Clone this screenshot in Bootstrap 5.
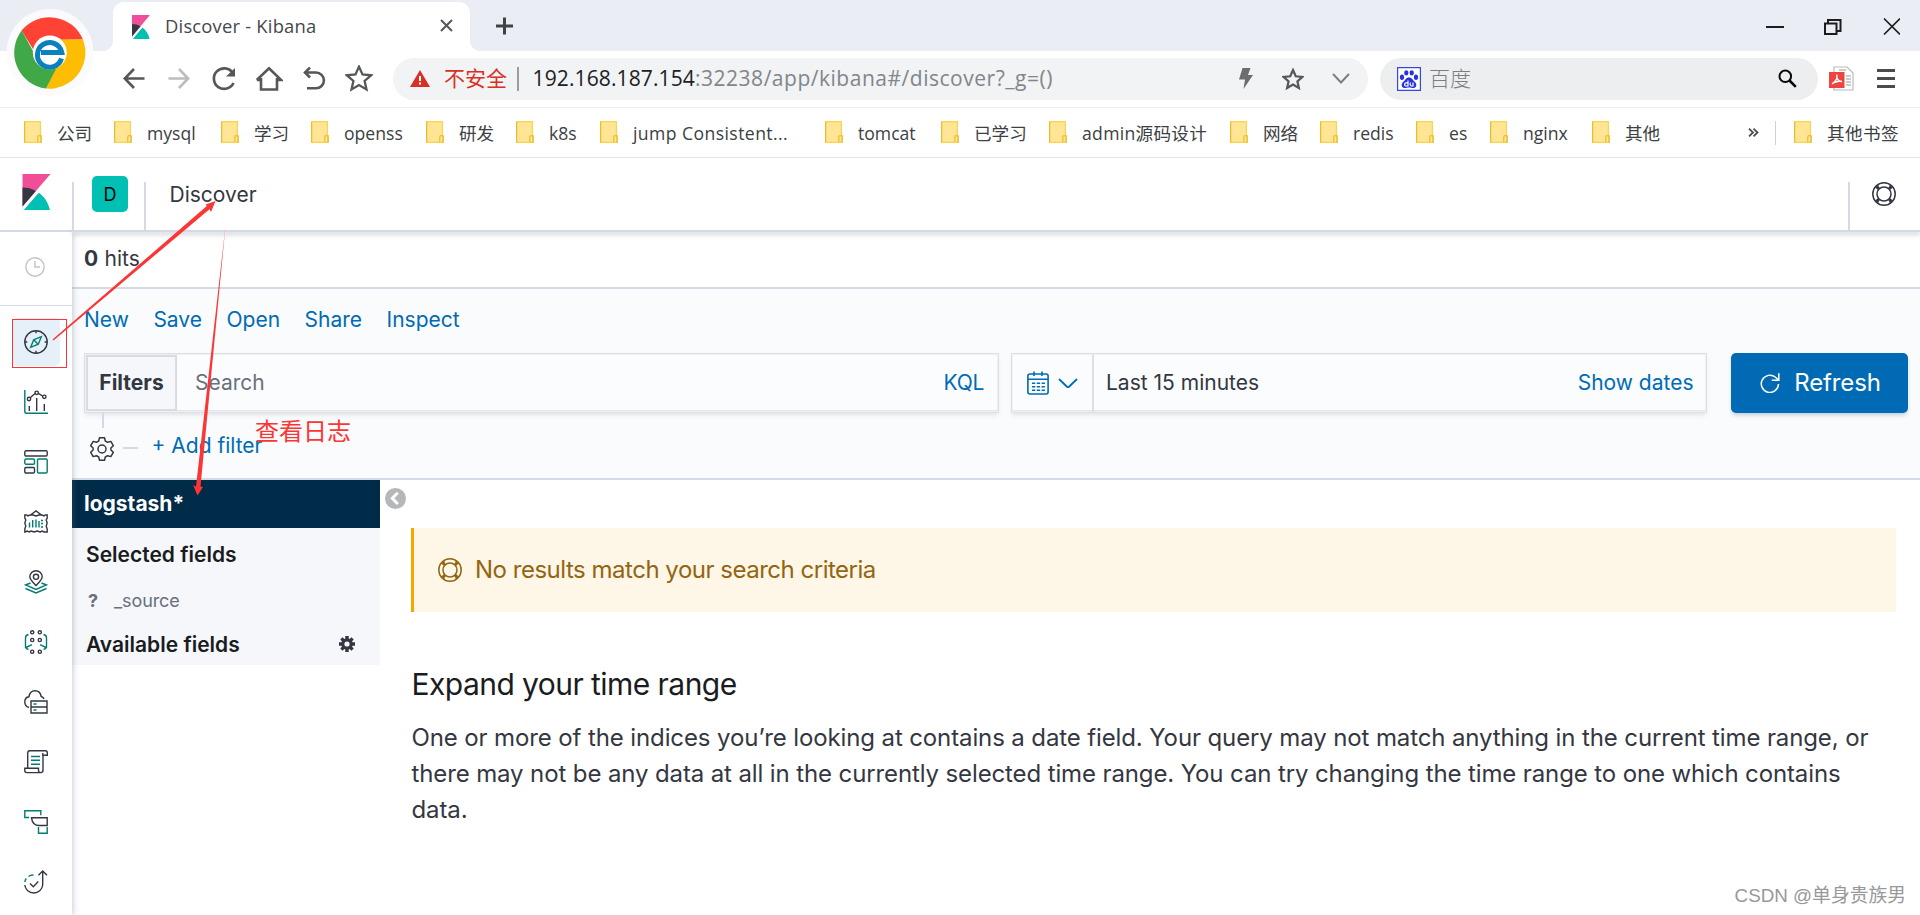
<!DOCTYPE html>
<html lang="zh-CN">
<head>
<meta charset="utf-8">
<meta name="viewport" content="width=device-width, initial-scale=1">
<title>Discover - Kibana</title>
<link href="https://cdn.jsdelivr.net/npm/bootstrap@5.3.0/dist/css/bootstrap.min.css" rel="stylesheet">
<style>
  :root { --line:#d3dae6; --link:#006bb4; --ink:#343741; --teal:#017d73; }
  body { width:1920px; height:915px; font-family:Inter,"Noto Sans CJK SC",sans-serif; font-size:21px; line-height:1.5; color:var(--ink); background:#fff; }
  svg { display:block; flex:none; }
  a { text-decoration:none; color:var(--link); }
  .chrome-ui { font-family:"Open Sans","Noto Sans CJK SC",sans-serif; height:158px; }
  .tabstrip { height:51px; background:#ebedf5; padding-left:113px; }
  .tab-on { width:357px; height:49px; background:#fff; border-radius:11px 11px 0 0; padding:0 17px 0 19px; position:relative; font-size:18.4px; color:#45474b; }
  .tab-on::before, .tab-on::after { content:""; position:absolute; bottom:0; width:11px; height:11px; }
  .tab-on::before { left:-11px; background:radial-gradient(circle at 0 0,transparent 11px,#fff 11.5px); }
  .tab-on::after { right:-11px; background:radial-gradient(circle at 100% 0,transparent 11px,#fff 11.5px); }
  .tab-title { margin:-2px 0 0 15px; letter-spacing:.2px; }
  .brand-ball { left:6px; top:9px; z-index:3; }
  .toolbar { height:57px; border-bottom:1px solid #eceded; padding-left:111px; }
  .tool { width:45px; display:flex; justify-content:center; }
  .pill { height:42px; border-radius:21px; margin-top:-1px; }
  .pill-url { width:975px; background:#f1f3f4; margin-left:12px; padding:0 18px 0 17px; font-size:21px; color:#80868b; }
  .pill-find { width:438px; background:#eceef0; margin-left:12px; padding:0 21px 0 17px; color:#7b7d80; font-size:21px; font-weight:300; }
  .unsafe { color:#d93025; margin-left:14px; width:73px; }
  .sep-url { width:2px; height:24px; background:#9a9da1; margin-right:13.500px; }
  .url-host { color:#202124; letter-spacing:.12px; }
  .url-rest { letter-spacing:.52px; }
  .marks { height:50px; border-bottom:1px solid #e3e4e6; padding-left:24px; font-size:17.6px; color:#3c4043; }
  .bm { display:flex; align-items:center; gap:15px; white-space:nowrap; flex:none; padding-top:1px; }
  .bm svg { margin-top:-2px; }
  .bm:nth-child(1){width:90px}.bm:nth-child(2){width:107px}.bm:nth-child(3){width:90px}.bm:nth-child(4){width:115px}
  .bm:nth-child(5){width:90px}.bm:nth-child(6){width:84px}.bm:nth-child(7){width:225px;letter-spacing:.42px}.bm:nth-child(8){width:116px}
  .bm:nth-child(9){width:108px}.bm:nth-child(10){width:181px;letter-spacing:.3px}.bm:nth-child(11){width:90px}.bm:nth-child(12){width:96px}
  .bm:nth-child(13){width:74px}.bm:nth-child(14){width:102px}.bm:nth-child(15){width:156px}
  .bm:last-child { letter-spacing:.4px; }
  .more { width:27px; }
  .sep-bm { width:1px; height:24px; background:#cfd1d4; margin-right:18px; }
  .khead { height:74px; border-bottom:2px solid var(--line); position:relative; z-index:2; }
  .kshadow { position:absolute; left:72px; right:0; bottom:-2px; height:4px; box-shadow:0 3px 4px rgba(100,110,135,.28); z-index:-1; }
  .vline { width:2px; height:48px; background:var(--line); margin-top:24px; }
  .cell-logo { width:72px; padding:16px 0 0 17.5px; }
  .space-d { width:36px; height:36px; border-radius:5px; background:#00bfb3; color:#000; font-size:18px; margin:18px 16px 0 18px; }
  .crumb { margin:21px 0 0 23.5px; }
  .rail { width:72px; flex:none; position:relative; z-index:1; box-shadow:1px 0 6px rgba(90,110,140,.35); background:#fff; clip-path:inset(0 -12px 0 0); }
  .rail-clock { height:74px; border-bottom:1px solid var(--line); padding:25px 0 0 25px; }
  .rail-list { padding:12px 0 0 12px; }
  .rail-item { width:48px; height:48px; margin-bottom:12px; display:flex; align-items:center; justify-content:center; border-radius:5px; }
  .rail-item.on { background:#e6f0f8; }
  .rail svg { fill:none; stroke:var(--ink); stroke-width:1.4; }
  .rail svg .t { stroke:var(--teal); }
  .hits { height:57px; border-bottom:2px solid var(--line); padding:11px 0 0 12px; word-spacing:.5px; }
  .qarea { height:191px; background:#fafbfd; border-bottom:2px solid var(--line); padding:0 12px; }
  .menu-row { height:64px; padding-top:15px; gap:24.5px; }
  .field { height:60px; border:1px solid #dee0e4; background:#fbfcfd; box-shadow:inset 0 0 0 1px #eff0f3,inset 0 -2px 0 #e4e6ea,0 3px 4px -1px rgba(152,162,179,.25); }
  .field-q { width:915px; padding-right:14px; }
  .field-q a { letter-spacing:-.3px; }
  .btn-filters { width:91px; height:56px; border:2px solid #d9dbe0; background:#f5f7fa; font-weight:700; margin-left:1px; font-size:21px; }
  .field-t { width:696px; margin-left:12px; padding-right:12.5px; }
  .quick { width:82px; height:57px; border-right:2px solid #dee0e4; padding-left:15px; gap:9px; }
  .btn-refresh { width:177px; height:60px; border:0; border-radius:5px; background:#006bb4; color:#fff; font-size:24px; letter-spacing:-.15px; margin-left:24px; padding:0 0 0 2px; gap:14px; box-shadow:0 3px 4px -1px rgba(54,97,126,.3); }
  .filt-row { padding-left:6px; position:relative; height:66px; }
  .stem { position:absolute; left:18px; top:0; width:2px; height:15px; background:var(--line); }
  .dash { width:15px; height:2px; background:var(--line); margin:0 13.5px 0 9px; }
  .index-bar { height:48px; background:#002b49; color:#fff; font-weight:700; padding:8px 12px; }
  .fields { width:308px; flex:none; }
  .field-list { height:137px; background:#f5f7fa; padding:12px 25px 0 14px; }
  .fh { font-weight:600; color:#1a1c21; line-height:30px; }
  .src { font-size:18px; color:#69707d; line-height:28px; margin:17px 0 15px 2px; gap:18px; letter-spacing:-.1px; }
  .src b { width:8px; }
  .results { padding:48px 24px 0 31px; position:relative; }
  .collapse-dot { position:absolute; left:5px; top:8px; }
  .note { height:84px; border-left:3px solid #f5a700; background:#fef6e6; padding-left:24px; gap:13px; color:#936512; font-size:24px; letter-spacing:-.49px; }
  .results h3 { font-size:30px; font-weight:400; letter-spacing:-.55px; line-height:36px; color:#1a1c21; margin:54px 0 18px .5px; }
  .results p { font-size:24px; letter-spacing:-.118px; line-height:36px; margin:0 0 0 .5px; }
  .anno { left:0; top:0; z-index:5; pointer-events:none; }
  .anno-label { left:255px; top:414px; font-size:24px; color:#fc3535; z-index:5; line-height:36px; }
  .wmark { right:14px; bottom:5px; font-size:18.8px; line-height:28px; color:#97989a; font-family:"Liberation Sans","Noto Sans CJK SC",sans-serif; z-index:5; }
</style>
</head>
<body class="d-flex flex-column overflow-hidden position-relative">

<svg width="0" height="0" class="position-absolute">
  <symbol id="kib" viewBox="0 0 32 32"><path fill="#f04e98" d="M4 0v28.789L28.935.017z"/><path fill="#343741" d="M4 12v16.789l11.906-13.738A24.721 24.721 0 0 0 4 12"/><path fill="#00bfb3" d="M18.479 16.664L6.268 30.754l-1.073 1.237h23.191c-1.252-6.292-4.883-11.719-9.908-15.327"/></symbol>
  <symbol id="folder" viewBox="0 0 18 22"><path fill="#ffe594" stroke="#f8d44f" stroke-width="1.2" d="M.6.6h15.800v14h1v6.800H.6z"/><path fill="none" stroke="#e8bd35" stroke-width="1.200" d="M.6 21.400V1M13.800 21V16q0-1.300 1.600-1.300t1.600 1.300v4.500q0 .9-1 .9"/></symbol>
  <symbol id="buoy" viewBox="0 0 24 24"><g fill="none" stroke="currentColor"><circle cx="12" cy="12" r="11.200" stroke-width="1.500"/><circle cx="12" cy="12" r="7" stroke-width="1.500"/><path stroke-width="3" d="M4.300 4.300l2.700 2.700M19.700 4.300L17 7M4.300 19.700L7 17M19.700 19.700L17 17"/><path stroke-width="1.200" d="M6.700 1.800q.3 3.200-1.800 5M17.300 1.800q-.3 3.200 1.800 5M6.700 22.200q.3-3.200-1.800-5M17.300 22.200q-.3-3.200 1.800-5" opacity=".5"/></g></symbol>
</svg>

<header class="chrome-ui flex-shrink-0 position-relative">
  <svg class="brand-ball position-absolute" width="88" height="88" viewBox="0 0 88 88">
    <circle cx="44" cy="43.500" r="43.500" fill="#fbfbfe"/>
    <path fill="#fe4335" d="M43.700 43.500L27 40 15.500 21.500A36.300 36.300 0 0 1 77 30.500L44 31z"/>
    <path fill="#fdbd03" d="M44 30.500H77A36.300 36.300 0 0 1 40 79.600L50 58z"/>
    <path fill="#41a847" d="M15.700 21.500A36.300 36.300 0 0 0 40 79.600L50 60 27 42z"/>
    <circle cx="43.800" cy="43.500" r="17" fill="#fff"/>
    <path fill="none" stroke="#0b80bd" stroke-width="5" d="M55.500 49.500a12.300 12.300 0 1 1 .3-6H35"/>
  </svg>
  <div class="tabstrip d-flex align-items-end">
    <div class="tab-on d-flex align-items-center">
      <svg width="18" height="24" viewBox="4 0 25 32" preserveAspectRatio="none"><path fill="#f04e98" d="M4 0v28.789L28.935.017z"/><path fill="#343741" d="M4 12v16.789l11.906-13.738A24.721 24.721 0 0 0 4 12"/><path fill="#00bfb3" d="M18.479 16.664L5.195 31.991h23.191c-1.252-6.292-4.883-11.719-9.908-15.327"/></svg>
      <span class="tab-title">Discover - Kibana</span>
      <svg class="ms-auto" style="margin-top:-2px" width="13" height="13" viewBox="0 0 13 13"><path stroke="#55585c" stroke-width="2" d="M1 1l11 11M12 1L1 12"/></svg>
    </div>
    <svg class="align-self-center ms-4" width="20" height="20" viewBox="0 0 20 20"><path stroke="#3f4246" stroke-width="3" d="M10.500 1.500v17M2 10h17"/></svg>
    <svg class="ms-auto align-self-center" style="margin-right:20px" width="136" height="20" viewBox="0 0 136 20"><g fill="none" stroke="#1b1c1f" stroke-width="2"><path d="M2 11h18"/><path d="M61 7.500h11.500V18H61zM64 7V4h12.500v11H73"/><path stroke-width="1.700" d="M120 2.500l16 16M136 2.500l-16 16"/></g></svg>
  </div>
  <div class="toolbar d-flex align-items-center">
    <div class="tool"><svg width="24" height="24" viewBox="0 0 24 24" fill="none" stroke="#55585a" stroke-width="2.600"><path d="M22.500 11.500H3M12 2L2.800 11.500 12 21"/></svg></div>
    <div class="tool"><svg width="24" height="24" viewBox="0 0 24 24" fill="none" stroke="#bbbdbf" stroke-width="2.600"><path d="M1.500 11.500H21M12 2L21.200 11.500 12 21"/></svg></div>
    <div class="tool"><svg width="26" height="26" viewBox="0 0 26 26" fill="none" stroke="#55585a" stroke-width="2.700"><path d="M22.500 17A10.300 10.300 0 1 1 21.500 6.500"/><path d="M24 2v8.500h-9z" fill="#55585a" stroke="none"/></svg></div>
    <div class="tool"><svg width="28" height="26" viewBox="0 0 28 26" fill="none" stroke="#55585a" stroke-width="2.600"><path d="M6 12v11.500h16V12M1.800 14L14 2.200 26.200 14H22M6 14H1.800"/></svg></div>
    <div class="tool"><svg width="24" height="24" viewBox="0 0 24 24" fill="none" stroke="#55585a" stroke-width="2.600"><path d="M8 .5L3 5.500l5 5M3.500 5.500H14a7.900 7.900 0 0 1 0 15.800H5"/></svg></div>
    <div class="tool"><svg width="28" height="28" viewBox="0 0 28 28" fill="none" stroke="#55585a" stroke-width="2.300"><path d="M14 1.600l3.500 7.900 8.600.8-6.500 5.700 1.900 8.500L14 20l-7.500 4.500L8.400 16 1.900 10.300l8.600-.8z"/></svg></div>
    <div class="pill pill-url d-flex align-items-center">
      <svg width="20" height="17" viewBox="0 0 20 17"><path fill="#d93025" d="M10 0l10 17H0z"/><path stroke="#fff" stroke-width="2" d="M10 6v5M10 12.500v2"/></svg>
      <span class="unsafe">不安全</span><span class="sep-url"></span>
      <span class="text-nowrap"><span class="url-host">192.168.187.154</span><span class="url-rest">:32238/app/kibana#/discover?_g=()</span></span>
      <svg class="ms-auto" width="14" height="21" viewBox="0 0 14 21"><path fill="#6b6e71" d="M3.500 0h8L9 7h5L4.500 21 6 11.500H0z"/></svg>
      <svg style="margin-left:29px" width="22" height="22" viewBox="0 0 28 28" fill="none" stroke="#55585a" stroke-width="2.800"><path d="M14 2.600l3.500 7.900 8.600.8-6.500 5.700 1.900 8.500L14 21l-7.500 4.500L8.400 17 1.900 11.300l8.600-.8z"/></svg>
      <svg style="margin-left:28px" width="18" height="11" viewBox="0 0 18 11"><path fill="none" stroke="#7b7e81" stroke-width="1.900" d="M1 1l8 8.500L17 1"/></svg>
    </div>
    <div class="pill pill-find d-flex align-items-center">
      <svg width="24" height="24" viewBox="0 0 24 24"><path fill="#fff" stroke="#3a44e0" stroke-width="1.200" d="M.6.600h22.800v22.800H.6z"/><g fill="#2932e1"><ellipse cx="5" cy="10.300" rx="2.100" ry="2.700"/><ellipse cx="9.300" cy="5.900" rx="2.100" ry="2.700"/><ellipse cx="14.700" cy="5.900" rx="2.100" ry="2.700"/><ellipse cx="19" cy="10.300" rx="2.100" ry="2.700"/><path d="M12 10.500c3 0 3.500 2.500 5.500 4 2.800 2.300 2.300 6.300-1 6.500-2 0-2.500-.5-4.500-.5s-2.500.5-4.500.5c-3.300-.2-3.800-4.200-1-6.500 2-1.500 2.500-4 5.500-4z"/></g><path fill="none" stroke="#fff" stroke-width="1.200" d="M11 13.500v5.500H9.200a1.400 1.400 0 0 1 0-3.200H11M13.200 15.500v2q0 1.500 1.300 1.500H16v-3.500"/></svg>
      <span style="margin-left:8px">百度</span>
      <svg class="ms-auto" width="19" height="19" viewBox="0 0 19 19" fill="none" stroke="#0a0a0a"><circle cx="7.300" cy="7.300" r="5.800" stroke-width="2"/><path stroke-width="2.600" d="M11.500 11.500l6.300 6.300"/></svg>
    </div>
    <svg style="margin-left:11px;margin-top:-1px" width="25" height="25" viewBox="0 0 25 25"><path fill="#fff" stroke="#b9babc" stroke-width="1.200" d="M5 1h13l6 6v17H5z"/><path stroke="#b9babc" stroke-width="1.400" d="M10 4h7M17 10h5M17 13h5M17 16h5M17 19h5"/><path fill="#f0423e" d="M0 6h15.500v16H0z"/><path fill="none" stroke="#fff" stroke-width="1.400" d="M7.500 8.500c1.500 3 .5 6-4.500 9.500M7.500 11c1 3 3 4.500 5.500 4.500-3-.5-6 0-8.500 1.500"/></svg>
    <svg style="margin-left:23px" width="18" height="20" viewBox="0 0 18 20"><path stroke="#4a4c4e" stroke-width="3" d="M0 1.500h18M0 9.500h18M0 17.500h18"/></svg>
  </div>
  <nav class="marks d-flex align-items-center">
    <span class="bm"><svg width="18" height="22"><use href="#folder"/></svg>公司</span>
    <span class="bm"><svg width="18" height="22"><use href="#folder"/></svg>mysql</span>
    <span class="bm"><svg width="18" height="22"><use href="#folder"/></svg>学习</span>
    <span class="bm"><svg width="18" height="22"><use href="#folder"/></svg>openss</span>
    <span class="bm"><svg width="18" height="22"><use href="#folder"/></svg>研发</span>
    <span class="bm"><svg width="18" height="22"><use href="#folder"/></svg>k8s</span>
    <span class="bm"><svg width="18" height="22"><use href="#folder"/></svg>jump Consistent...</span>
    <span class="bm"><svg width="18" height="22"><use href="#folder"/></svg>tomcat</span>
    <span class="bm"><svg width="18" height="22"><use href="#folder"/></svg>已学习</span>
    <span class="bm"><svg width="18" height="22"><use href="#folder"/></svg>admin源码设计</span>
    <span class="bm"><svg width="18" height="22"><use href="#folder"/></svg>网络</span>
    <span class="bm"><svg width="18" height="22"><use href="#folder"/></svg>redis</span>
    <span class="bm"><svg width="18" height="22"><use href="#folder"/></svg>es</span>
    <span class="bm"><svg width="18" height="22"><use href="#folder"/></svg>nginx</span>
    <span class="bm"><svg width="18" height="22"><use href="#folder"/></svg>其他</span>
    <span class="more"><svg width="11" height="9" viewBox="0 0 11 9"><path fill="none" stroke="#4a4d50" stroke-width="1.800" d="M1 .7l4 3.800-4 3.800M5.500.7l4 3.800-4 3.800"/></svg></span>
    <span class="sep-bm"></span>
    <span class="bm"><svg width="18" height="22"><use href="#folder"/></svg>其他书签</span>
  </nav>
</header>

<div class="khead d-flex flex-shrink-0 bg-white">
  <div class="kshadow"></div>
  <div class="cell-logo"><svg width="36" height="36"><use href="#kib"/></svg></div>
  <div class="vline"></div>
  <div class="space-d d-flex align-items-center justify-content-center">D</div>
  <div class="vline"></div>
  <div class="crumb">Discover</div>
  <div class="vline ms-auto"></div>
  <div style="padding:24px 24px 0 22px"><svg width="24" height="24"><use href="#buoy"/></svg></div>
</div>

<div class="d-flex flex-grow-1" style="min-height:0">
  <aside class="rail">
    <div class="rail-clock"><svg style="stroke:#c2c3c6" width="20" height="20" viewBox="0 0 20 20"><circle cx="10" cy="10" r="9.200"/><path d="M10 4v6h5"/></svg></div>
    <div class="rail-list">
      <div class="rail-item on"><svg width="24" height="24" viewBox="0 0 24 24"><circle cx="12" cy="12" r="11.200"/><path d="M12 .8v2.500M12 20.700v2.500M.8 12h2.500M20.700 12h2.500"/><path class="t" d="M17.300 6.700l-3 7.500-7.600 3.100 3-7.500zM9.700 9.800l4.500 4.500"/></svg></div>
      <div class="rail-item"><svg width="24" height="24" viewBox="0 0 24 24"><path class="t" d="M.8 0v21.700q0 1.500 1.500 1.500H24"/><path d="M5.300 16v5M12.700 8v13M20.300 14v7M6.500 7.500l4.500-4M14.300 3.300L18.500 6"/><circle cx="5" cy="9" r="1.700"/><circle cx="12.700" cy="2.800" r="1.700"/><circle cx="20.300" cy="6.800" r="1.700"/></svg></div>
      <div class="rail-item"><svg width="24" height="24" viewBox="0 0 24 24"><rect x=".8" y=".8" width="22.400" height="5.200" rx="1.200"/><rect class="t" x=".8" y="9" width="9.700" height="5.200" rx="1.200"/><rect x=".8" y="17.500" width="9.700" height="5.500" rx="1.200"/><rect class="t" x="13.500" y="9" width="9.700" height="14" rx="1.200"/></svg></div>
      <div class="rail-item"><svg width="24" height="24" viewBox="0 0 24 24"><path d="M.8 5h2l1.200 1 2-1h3l3 1 3-1h3l2 1 1.200-1h2v3l-1 2 1 3-1 3 1 3v3h-3l-2-1-2 1-3-1-3 1-3-1-2 1-2-1-2 1H.8v-3l1-3-1-3 1-3-1-2zM6.500 5L12 .9 17.500 5"/><path class="t" d="M5.500 12.500v5M8.700 10v7.500M12 9.500v8M15 11v6.500M17 10.500h2M17 13.500h2M17 17h2"/></svg></div>
      <div class="rail-item"><svg width="24" height="24" viewBox="0 0 24 24"><path d="M12 15.500C8 11.500 5.800 9.500 5.800 6.800a6.200 6.100 0 0 1 12.400 0c0 2.700-2.200 4.700-6.200 8.700z"/><circle cx="12" cy="6.800" r="2.600"/><path class="t" d="M6.500 13L1.500 15l10.500 4.500L22.500 15l-5-2M1.500 18.500L12 23l10.500-4.500"/></svg></div>
      <div class="rail-item"><svg width="24" height="24" viewBox="0 0 24 24"><g><circle cx="8.200" cy="2.300" r="1.600"/><circle cx="15.800" cy="2.300" r="1.600"/><circle cx="8.200" cy="10" r="1.600"/><circle cx="15.800" cy="10" r="1.600"/><circle cx="8.200" cy="21.700" r="1.600"/><circle cx="15.800" cy="21.700" r="1.600"/></g><path class="t" d="M4.500 4.500Q1.500 5 1.500 8v9q0 1.500 3 2.500M2 17.500l6-2.800M19.500 4.500q3 .5 3 3.500v9q0 1.500-3 2.500M22 17.500l-6-2.800"/></svg></div>
      <div class="rail-item"><svg width="24" height="24" viewBox="0 0 24 24"><path d="M5 17.500C1.500 16.500.8 14 .8 12c0-3 2-5 4.200-5.300C5.500 3 8 .8 11 .8c3.500 0 5.600 2.400 6.200 5.700 1.300.2 2.300 1 2.800 2.500"/><path d="M7 11h16v12H7zM7 17h16"/><path class="t" d="M9.500 14h3M9.500 20h3"/></svg></div>
      <div class="rail-item"><svg width="24" height="24" viewBox="0 0 24 24"><path d="M3.700 18V3q0-2.200 2-2.200H21.500q1.800 0 1.800 2v2.400h-4.500V3M19 5v15q0 2.600-2.300 2.600T14.500 20v-1.800H.8v2.300q0 2.100 2 2.100h14"/><path class="t" d="M7 6.500h9M7 10.300h9M7 14.200h9"/></svg></div>
      <div class="rail-item"><svg width="24" height="24" viewBox="0 0 24 24"><path class="t" d="M5 7.500H.8V.8h16v4.500M14.500 17v6.200h8.700V17"/><path d="M7.500 7.800h15.700v7.700h-8q-6.700 0-7.700-7.700z"/></svg></div>
      <div class="rail-item"><svg width="24" height="24" viewBox="0 0 24 24"><path d="M18.700 1v14a9 9 0 0 1-17.900 0M14.500 5.300L18.700 1 23 5.300M6 13.500l3.300 3.300 5-5.300"/><path class="t" d="M.9 12q.2-2 1.300-3.500M4.500 6.500Q6.500 4.800 9.500 5"/></svg></div>
    </div>
  </aside>

  <main class="flex-grow-1 d-flex flex-column" style="min-width:0">
    <div class="hits"><b>0</b> hits</div>
    <section class="qarea">
      <div class="menu-row d-flex"><a href="#">New</a><a href="#">Save</a><a href="#">Open</a><a href="#">Share</a><a href="#">Inspect</a></div>
      <div class="d-flex">
        <div class="field field-q d-flex align-items-center">
          <button class="btn-filters p-0 text-reset">Filters</button>
          <span style="margin-left:18px;color:#69707d">Search</span>
          <a href="#" class="ms-auto">KQL</a>
        </div>
        <div class="field field-t d-flex align-items-center">
          <div class="quick d-flex align-items-center">
            <svg width="22" height="24" viewBox="0 0 22 24" fill="none" stroke="#006bb4" stroke-width="1.600"><rect x=".9" y="3" width="20.200" height="20" rx="2"/><path d="M1 8.200h20M7 .5V5M15 .5V5"/><path stroke-dasharray="3.300 1.500" d="M5 12.300h13M5 15.800h13M5 19.300h13"/></svg>
            <svg width="20" height="11" viewBox="0 0 20 11"><path fill="none" stroke="#006bb4" stroke-width="1.800" stroke-linecap="round" d="M1.500 1.500l7.500 7.200q1 .8 2 0l7.500-7.200"/></svg>
          </div>
          <span style="margin-left:12px">Last 15 minutes</span>
          <a href="#" class="ms-auto">Show dates</a>
        </div>
        <button class="btn-refresh d-flex align-items-center justify-content-center">
          <svg width="20" height="20" viewBox="0 0 20 20" fill="none" stroke="#fff" stroke-width="1.500"><path d="M18.500 11a8.600 8.600 0 1 1-3-6.700l3 2.700M18.800 .3v6.900h-7"/></svg>Refresh</button>
      </div>
      <div class="filt-row d-flex align-items-center">
        <span class="stem"></span>
        <svg style="margin-top:5px" width="24" height="24" viewBox="0 0 24 24" fill="none" stroke="#343741" stroke-width="1.500"><path stroke-linejoin="round" d="M9.500.8h5l.8 3.200 2.300 1.300 3.200-.9 2.500 4.300-2.400 2.300v2l2.400 2.300-2.500 4.300-3.200-.9-2.300 1.300-.8 3.200h-5L8.700 20l-2.300-1.300-3.200.9L.7 15.300 3.100 13v-2L.7 8.700l2.500-4.300 3.200.9L8.700 4z"/><circle cx="12" cy="12" r="4"/></svg>
        <span class="dash" style="margin-top:4px"></span>
        <a href="#">+ Add filter</a>
      </div>
    </section>
    <div class="d-flex align-items-start">
      <div class="fields">
        <div class="index-bar">logstash*</div>
        <div class="field-list">
          <div class="fh">Selected fields</div>
          <div class="src d-flex"><b>?</b><span>_source</span></div>
          <div class="fh d-flex justify-content-between align-items-center">Available fields
            <svg style="margin-top:-3px" width="16" height="16" viewBox="0 0 16 16"><g stroke="#343741" stroke-width="3.400"><path d="M8 0v16M0 8h16M2.400 2.400l11.200 11.200M13.600 2.400L2.400 13.600"/></g><circle cx="8" cy="8" r="5.800" fill="#343741"/><circle cx="8" cy="8" r="2.600" fill="#f5f7fa"/></svg>
          </div>
        </div>
      </div>
      <div class="results flex-grow-1">
        <svg class="collapse-dot" width="21" height="21" viewBox="0 0 21 21"><circle cx="10.500" cy="10.500" r="10.500" fill="#b6b7b9"/><path fill="none" stroke="#fff" stroke-width="3" d="M12.800 4.700L7.300 10.300l5.500 5.700"/></svg>
        <div class="note d-flex align-items-center"><svg width="24" height="24"><use href="#buoy"/></svg><span>No results match your search criteria</span></div>
        <h3>Expand your time range</h3>
        <p>One or more of the indices you’re looking at contains a date field. Your query may not match anything in the current time range, or there may not be any data at all in the currently selected time range. You can try changing the time range to one which contains data.</p>
      </div>
    </div>
  </main>
</div>

<svg class="anno position-absolute" width="400" height="520" viewBox="0 0 400 520">
  <rect x="12.500" y="319.500" width="54" height="48" fill="none" stroke="#fc3535"/>
  <g fill="#fc3535"><path d="M52.500 339.500L206.800 206 205.700 204.500 215.500 201 211 212 209.500 209.300 53.500 340.500z"/><path d="M225.500 226L196 486.500 193 485 197.500 495.500 203 487 200.500 486.500z"/></g>
</svg>
<div class="anno-label position-absolute">查看日志</div>
<div class="wmark position-absolute">CSDN @单身贵族男</div>

<script src="https://cdn.jsdelivr.net/npm/bootstrap@5.3.0/dist/js/bootstrap.bundle.min.js"></script>
</body>
</html>
